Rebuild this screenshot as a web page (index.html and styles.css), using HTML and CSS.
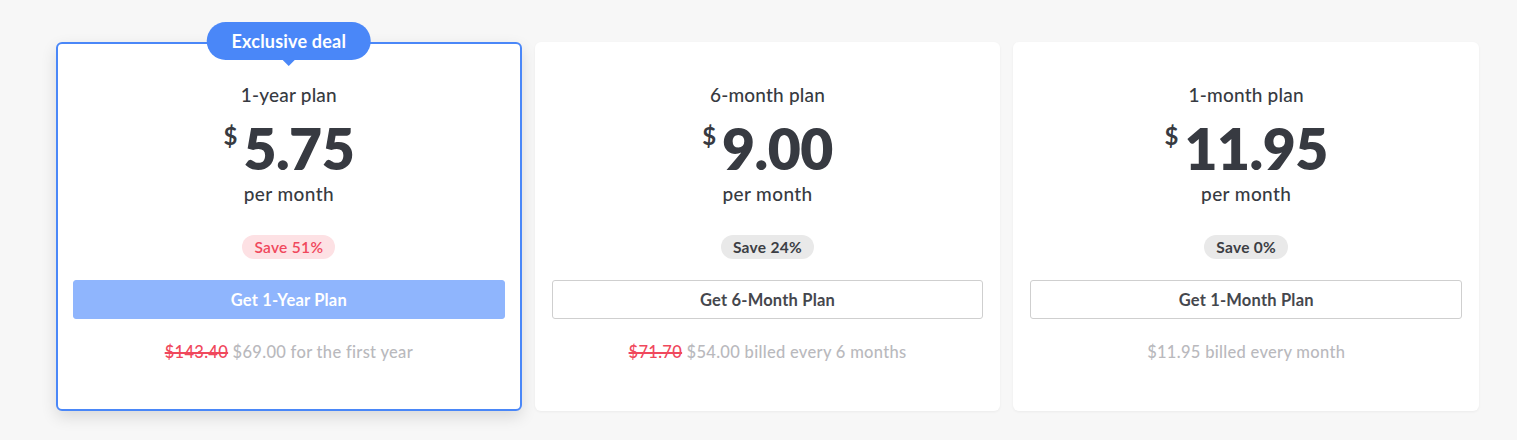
FILE: index.html
```html
<!DOCTYPE html>
<html>
<head>
<meta charset="utf-8">
<link rel="stylesheet" href="styles.css">
</head>
<body>
<div class="plans">
  <div class="card featured">
    <div class="deal">Exclusive deal</div>
    <div class="title">1-year plan</div>
    <div class="price"><span class="cur">$</span><span class="amt">5.75</span></div>
    <div class="per">per month</div>
    <div class="save red">Save 51%</div>
    <button class="btn primary">Get 1-Year Plan</button>
    <div class="foot"><s>$143.40</s> $69.00 for the first year</div>
  </div>
  <div class="card">
    <div class="title">6-month plan</div>
    <div class="price"><span class="cur">$</span><span class="amt">9.00</span></div>
    <div class="per">per month</div>
    <div class="save">Save 24%</div>
    <button class="btn">Get 6-Month Plan</button>
    <div class="foot"><s>$71.70</s> $54.00 billed every 6 months</div>
  </div>
  <div class="card">
    <div class="title">1-month plan</div>
    <div class="price"><span class="cur">$</span><span class="amt">11.95</span></div>
    <div class="per">per month</div>
    <div class="save">Save 0%</div>
    <button class="btn">Get 1-Month Plan</button>
    <div class="foot">$11.95 billed every month</div>
  </div>
</div>
</body>
</html>
```
FILE: styles.css
```css
html, body { margin: 0; padding: 0; }
body {
  background: #f7f7f7;
  font-family: Lato, "Open Sans", sans-serif;
  color: #373a41;
  height: 440px;
}
.plans {
  display: flex;
  gap: 13px;
  padding: 42px 38px 0 56px;
}
.card {
  position: relative;
  width: 466px;
  height: 369px;
  box-sizing: border-box;
  background: #fff;
  border-radius: 6px;
  box-shadow: 0 1px 3px rgba(0,0,0,0.05);
  display: flex;
  flex-direction: column;
  align-items: center;
  padding: 41px 17px 0;
}
.card.featured {
  border: 2px solid #4a87f8;
  padding: 39px 15px 0;
  box-shadow: 0 6px 16px rgba(0,0,0,0.12);
}
.deal {
  position: absolute;
  top: -22px;
  left: 50%;
  transform: translateX(-50%);
  background: #4a87f8;
  color: #fff;
  font-weight: 700;
  font-size: 18px;
  letter-spacing: 0.2px;
  line-height: 38px;
  padding: 0 25px;
  border-radius: 19px;
  white-space: nowrap;
}
.deal::after {
  content: "";
  position: absolute;
  left: 50%;
  bottom: -6px;
  margin-left: -6px;
  border-left: 6px solid transparent;
  border-right: 6px solid transparent;
  border-top: 6px solid #4a87f8;
}
.title {
  font-size: 19px;
  line-height: 24px;
  font-weight: 500;
  letter-spacing: 0.2px;
}
.price {
  display: flex;
  align-items: flex-start;
  margin-top: 9px;
  height: 64px;
}
.cur {
  font-size: 24px;
  font-weight: 700;
  line-height: 24px;
  margin-top: 8px;
  margin-right: 6px;
}
.amt {
  font-size: 57px;
  font-weight: 800;
  line-height: 64px;
  letter-spacing: -0.5px;
}
.per {
  font-size: 19px;
  line-height: 24px;
  margin-top: 2px;
  font-weight: 500;
  letter-spacing: 0.4px;
}
.save {
  margin-top: 29px;
  height: 24px;
  line-height: 24px;
  padding: 0 12px;
  border-radius: 12px;
  background: #e9e9e9;
  font-size: 15.5px;
  font-weight: 700;
  letter-spacing: 0.3px;
  color: #3c3e44;
}
.save.red {
  background: #fde1e4;
  color: #f0485c;
  font-weight: 600;
}
.btn {
  margin-top: 21px;
  width: 100%;
  height: 39px;
  border: 1px solid #cfcfcf;
  border-radius: 3px;
  background: #fff;
  font-family: inherit;
  font-size: 16.5px;
  font-weight: 700;
  letter-spacing: 0.2px;
  color: #45474d;
}
.btn.primary {
  background: #8fb5fd;
  border-color: #8fb5fd;
  color: #fff;
}
.foot {
  margin-top: 23px;
  font-size: 16.5px;
  line-height: 20px;
  color: #b9b9bd;
  font-weight: 500;
  letter-spacing: 0.3px;
}
.foot s {
  color: #f0485c;
  text-decoration-thickness: 1.5px;
}
```
